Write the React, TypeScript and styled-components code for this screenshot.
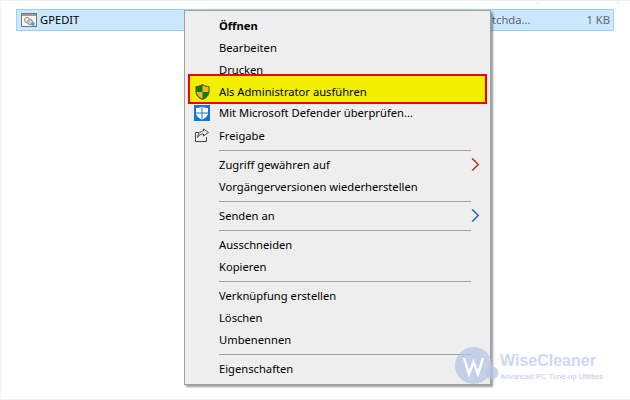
import styled, { createGlobalStyle } from 'styled-components'

const GlobalStyle = createGlobalStyle`
  html, body {
    margin: 0;
    padding: 0;
    background: #fff;
  }
`

const Page = styled.div`
  position: relative;
  width: 630px;
  height: 400px;
  box-sizing: border-box;
  padding: 8px 16px 0 15px;
  overflow: hidden;
  background: #fff;
  border-top: 1px solid #f0f0f0;
  border-left: 1px solid #f0f0f0;
  border-bottom: 1px solid #f0f0f0;
  font-family: 'Noto Sans', sans-serif;
  color: #000;
`

const ColumnTick = styled.span<{ $left: number }>`
  position: absolute;
  top: 0;
  left: ${({ $left }) => $left}px;
  width: 1px;
  height: 3px;
  background: #e4e4e4;
`

const FileRow = styled.div`
  display: flex;
  align-items: center;
  justify-content: space-between;
  box-sizing: border-box;
  height: 22px;
  padding: 0 3px 1px 4px;
  background: #cce8ff;
  border: 1px solid #99d1ff;
  font-size: 11.2px;
`

const FileName = styled.div`
  display: flex;
  align-items: center;
  gap: 3px;
`

const FileMeta = styled.div`
  display: flex;
  gap: 56px;
  color: #666;
`

const Menu = styled.div`
  position: absolute;
  left: 183px;
  top: 9px;
  box-sizing: border-box;
  width: 307px;
  height: 375px;
  padding: 4px 2px;
  background: #eeeeee;
  border: 1px solid #a0a0a0;
  box-shadow: 2px 2px 2px rgba(0, 0, 0, 0.4);
  font-size: 11.2px;
  line-height: 16px;
`

const Row = styled.div<{ $bold?: boolean; $height?: number }>`
  position: relative;
  display: flex;
  align-items: center;
  box-sizing: border-box;
  height: ${({ $height }) => $height ?? 22}px;
  padding-left: 32px;
  white-space: nowrap;
  font-weight: ${({ $bold }) => ($bold ? 700 : 400)};
`

const Highlight = styled.span`
  position: absolute;
  left: 1px;
  right: 1px;
  top: -7px;
  bottom: -2px;
  background: #f2f000;
  border: 2px solid #f00000;
`

const Label = styled.span`
  position: relative;
`

const IconSlot = styled.span`
  position: absolute;
  left: 6px;
  top: 2px;
  width: 18px;
  height: 18px;
  display: flex;
  align-items: center;
  justify-content: center;
`

const Chevron = styled.svg`
  position: absolute;
  right: 8px;
  top: 4px;
`

const Separator = styled.div`
  height: 1px;
  margin: 3px 17px 3px 32px;
  background: #a0a0a0;
`

const Watermark = styled.div`
  position: absolute;
  left: 454px;
  top: 346px;
  display: flex;
`

const Badge = styled.svg`
  flex: none;
`

const BrandText = styled.div`
  display: flex;
  flex-direction: column;
  padding-top: 4px;
  white-space: nowrap;
`

const BrandName = styled.div`
  font: 700 16px/20px 'Liberation Sans', sans-serif;
  color: #cdd8f1;
`

const BrandTag = styled.div`
  font: 400 7.6px/12px 'Liberation Sans', sans-serif;
  color: #bccaea;
`

function FileIcon() {
  return (
    <svg width="16" height="14" viewBox="0 0 16 14">
      <rect x="0.5" y="0.5" width="15" height="13" fill="#f4f4f4" stroke="#777" />
      <rect x="1" y="1" width="14" height="2" fill="#999" />
      <circle cx="6" cy="7" r="2.5" fill="none" stroke="#888" />
      <circle cx="9" cy="9" r="2.5" fill="#cfd8e0" stroke="#888" />
      <circle cx="12" cy="11" r="2" fill="#5aa9e0" />
    </svg>
  )
}

function ShieldIcon() {
  return (
    <svg width="15" height="16" viewBox="0 0 15 16">
      <path d="M7.5 0.5 C5.5 2 3 2.5 1 2.5 V8 C1 11.5 4 14 7.5 15.5 C11 14 14 11.5 14 8 V2.5 C12 2.5 9.5 2 7.5 0.5Z" fill="#127a1e" stroke="#50561c" strokeWidth="1" />
      <path d="M7.5 1.2 C9.5 2.4 11.5 3 13.4 3 V8 H7.5Z" fill="#efb81c" />
      <path d="M7.5 8 H1.6 C1.8 11 4.5 13.4 7.5 14.8Z" fill="#efb81c" />
    </svg>
  )
}

function DefenderIcon() {
  return (
    <svg width="16" height="16" viewBox="0 0 16 16">
      <rect width="16" height="16" fill="#0f78d4" />
      <path d="M8 1.5 C6.2 2.6 4.2 3 2 3 V8 C2 11 5 13.4 8 14.8 C11 13.4 14 11 14 8 V3 C11.8 3 9.8 2.6 8 1.5Z" fill="#fff" />
      <path d="M7.5 1.5 H8.5 V14.8 H7.5Z M2 7.5 H14 V8.5 H2Z" fill="#0f78d4" />
    </svg>
  )
}

function ShareIcon() {
  return (
    <svg width="16" height="15" viewBox="0 0 16 15" fill="none" stroke="#444" strokeWidth="1">
      <path d="M12.5 9 V13.5 H1.5 V4.5 H5" />
      <path d="M9.5 1 L14.5 4.5 L9.5 8 V6 C7 6 5 7 3.5 9.5 C4 6 6 3 9.5 3Z" />
    </svg>
  )
}

function Arrow({ color }: { color: string }) {
  return (
    <Chevron width="9" height="13" viewBox="0 0 9 13" fill="none">
      <path d="M0.5 0.5 L6.5 6.5 L0.5 12.5" stroke="#e8a040" strokeWidth="0.7" />
      <path d="M2 0.5 L8 6.5 L2 12.5" stroke="#4aa0f0" strokeWidth="0.7" />
      <path d="M1.2 0.5 L7.2 6.5 L1.2 12.5" stroke={color} strokeWidth="1.1" />
    </Chevron>
  )
}

export default function App() {
  return (
    <>
      <GlobalStyle />
      <Page>
        <ColumnTick $left={536} />
        <ColumnTick $left={617} />
        <FileRow>
          <FileName>
            <FileIcon />
            GPEDIT
          </FileName>
          <FileMeta>
            <span>tchda...</span>
            <span>1 KB</span>
          </FileMeta>
        </FileRow>
        <Menu>
          <Row $bold><Label>Öffnen</Label></Row>
          <Row><Label>Bearbeiten</Label></Row>
          <Row><Label>Drucken</Label></Row>
          <Row $height={21}>
            <Highlight />
            <IconSlot><ShieldIcon /></IconSlot>
            <Label>Als Administrator ausführen</Label>
          </Row>
          <Row>
            <IconSlot><DefenderIcon /></IconSlot>
            <Label>Mit Microsoft Defender überprüfen...</Label>
          </Row>
          <Row $height={23}>
            <IconSlot><ShareIcon /></IconSlot>
            <Label>Freigabe</Label>
          </Row>
          <Separator />
          <Row>
            <Label>Zugriff gewähren auf</Label>
            <Arrow color="#c0281c" />
          </Row>
          <Row><Label>Vorgängerversionen wiederherstellen</Label></Row>
          <Separator />
          <Row>
            <Label>Senden an</Label>
            <Arrow color="#1a60d0" />
          </Row>
          <Separator />
          <Row><Label>Ausschneiden</Label></Row>
          <Row><Label>Kopieren</Label></Row>
          <Separator />
          <Row><Label>Verknüpfung erstellen</Label></Row>
          <Row><Label>Löschen</Label></Row>
          <Row><Label>Umbenennen</Label></Row>
          <Separator />
          <Row><Label>Eigenschaften</Label></Row>
        </Menu>
        <Watermark>
          <Badge width="45" height="37" viewBox="0 0 45 37">
            <circle cx="18.5" cy="18.5" r="18.5" fill="#b4c7e6" fillOpacity="0.75" />
            <circle cx="37" cy="26" r="6.5" fill="#b4c7e6" fillOpacity="0.75" />
            <path d="M9 11 L14 27 L18.5 15 L23 27 L28 11" fill="none" stroke="#fff" strokeWidth="2.4" />
          </Badge>
          <BrandText>
            <BrandName>WiseCleaner</BrandName>
            <BrandTag>Advanced PC Tune-up Utilities</BrandTag>
          </BrandText>
        </Watermark>
      </Page>
    </>
  )
}
